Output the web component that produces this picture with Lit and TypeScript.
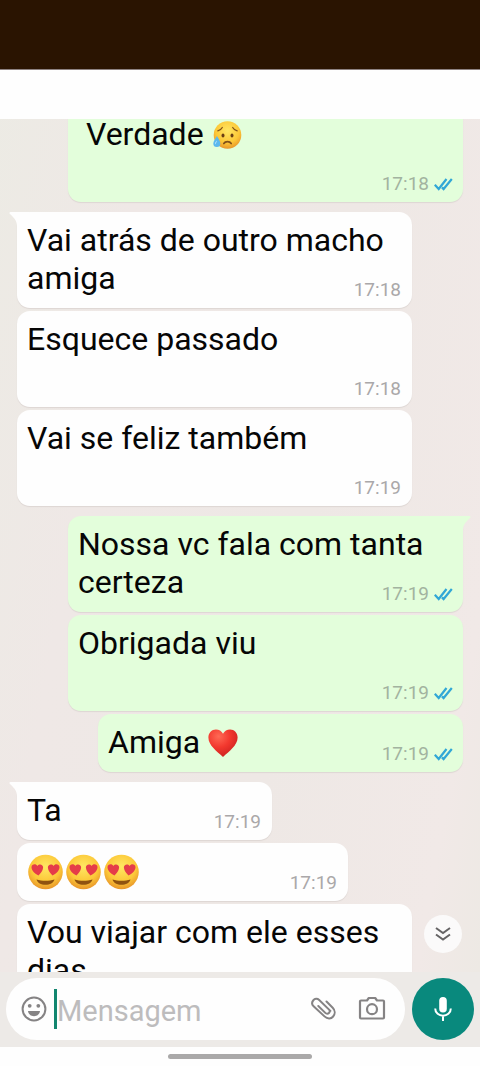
import { LitElement, html, css, svg } from "lit";
import { customElement, property } from "lit/decorators.js";
import { classMap } from "lit/directives/class-map.js";

type Part = string | { emoji: "sad" | "heart" | "love" };

interface Message {
  parts: Part[];
  time: string;
  mine?: boolean;
  first?: boolean;
  size: "wide" | "medium" | "short" | "small";
}

const MESSAGES: Message[] = [
  { parts: [" Verdade ", { emoji: "sad" }], time: "17:18", mine: true, size: "wide" },
  { parts: ["Vai atrás de outro macho amiga"], time: "17:18", first: true, size: "wide" },
  { parts: ["Esquece passado"], time: "17:18", size: "wide" },
  { parts: ["Vai se feliz também"], time: "17:19", size: "wide" },
  { parts: ["Nossa vc fala com tanta certeza"], time: "17:19", mine: true, first: true, size: "wide" },
  { parts: ["Obrigada viu"], time: "17:19", mine: true, size: "wide" },
  { parts: ["Amiga ", { emoji: "heart" }], time: "17:19", mine: true, size: "medium" },
  { parts: ["Ta"], time: "17:19", first: true, size: "small" },
  { parts: [{ emoji: "love" }, { emoji: "love" }, { emoji: "love" }], time: "17:19", size: "short" },
  { parts: ["Vou viajar com ele esses dias"], time: "", size: "wide" },
];

const faceGradient = svg`
  <defs>
    <radialGradient id="face" cx="50%" cy="35%" r="65%">
      <stop offset="0" stop-color="#ffe763"></stop>
      <stop offset="0.65" stop-color="#fcc838"></stop>
      <stop offset="1" stop-color="#e8952a"></stop>
    </radialGradient>
  </defs>`;

@customElement("chat-emoji")
export class ChatEmoji extends LitElement {
  @property() name = "sad";

  static styles = css`
    :host { display: inline-block; vertical-align: middle; }
    .icon { display: block; width: 30px; height: 30px; }
    .love { width: 38px; height: 36px; }
  `;

  render() {
    if (this.name === "heart") {
      return html`<svg class="icon" viewBox="0 0 30 30" role="img" aria-label="❤️">
        <defs>
          <radialGradient id="red" cx="35%" cy="25%" r="80%">
            <stop offset="0" stop-color="#ff6a55"></stop>
            <stop offset="0.5" stop-color="#f2382e"></stop>
            <stop offset="1" stop-color="#c9201f"></stop>
          </radialGradient>
        </defs>
        <path fill="url(#red)" d="M15 29C9 23.500.4 17.500.4 9.600.4 5 3.700 1.600 7.900 1.600c3 0 5.700 1.500 7.100 4.200 1.400-2.700 4.100-4.200 7.100-4.200 4.200 0 7.500 3.400 7.500 8 0 7.900-8.600 13.900-14.600 19.400z"></path>
      </svg>`;
    }
    if (this.name === "love") {
      return html`<svg class="icon love" viewBox="0 0 38 36" role="img" aria-label="😍">
        ${faceGradient}
        <circle cx="18.500" cy="18" r="17.300" fill="url(#face)"></circle>
        <path fill="#e53c49" d="M11.500 21.500C8 19.500 4.300 16.500 4.500 12.900c.1-3 4.500-3.900 5.900-1 2-2.600 6.100-1.200 5.700 1.900-.3 2.900-2.500 5.700-4.600 7.700z"></path>
        <path fill="#e53c49" d="M25.500 21.500c-2.100-2-4.300-4.800-4.600-7.700-.4-3.100 3.700-4.500 5.700-1.900 1.400-2.900 5.800-2 5.900 1 .2 3.600-3.500 6.600-7 8.600z"></path>
        <path fill="#8f5210" d="M9.500 25.500c5.500 1.800 12.500 1.800 18 0-1 3.400-4.600 5.300-9 5.300s-8-1.900-9-5.300z"></path>
      </svg>`;
    }
    return html`<svg class="icon" viewBox="0 0 30 30" role="img" aria-label="😥">
      ${faceGradient}
      <circle cx="15.500" cy="15" r="13.800" fill="url(#face)"></circle>
      <g fill="none" stroke="#80501a" stroke-width="1.200" stroke-linecap="round">
        <path d="M5.800 10.800c2-.5 3.700-1.700 4.500-3.300M25.200 10.800c-2-.5-3.700-1.700-4.500-3.300"></path>
        <path d="M11.800 23.500c1.500-2.600 5.900-2.600 7.400 0" stroke-width="1.700"></path>
      </g>
      <ellipse cx="11" cy="15.500" rx="1.500" ry="2.100" fill="#6b3f14"></ellipse>
      <ellipse cx="20" cy="15.500" rx="1.500" ry="2.100" fill="#6b3f14"></ellipse>
      <path fill="#5bb8ee" d="M5 16c1.500 2.500 3.300 5 3.300 7.500a3.500 3.500 0 0 1-7 0C1.300 21 3.500 18.500 5 16z"></path>
      <path fill="#c9ecff" d="M4.800 20.500c-1.200 1.500-2 2.800-1.600 4 .6-1.200 1.600-2 1.600-4z"></path>
    </svg>`;
  }
}

@customElement("chat-bubble")
export class ChatBubble extends LitElement {
  @property({ attribute: false }) message!: Message;

  static styles = css`
    :host { display: flex; flex-direction: column; }
    .bubble {
      position: relative;
      display: grid;
      box-sizing: border-box;
      padding: 9px 10px 11px;
      border-radius: 13px;
      background: #fefefe;
      box-shadow: 0 1px 1px #ddd6d3;
      color: #060606;
      align-self: flex-start;
    }
    .mine { background: #e3fedb; align-self: flex-end; }
    .wide { width: calc(100% - 51px); min-height: 96px; }
    .medium { width: calc(100% - 81px); }
    .short { width: 331px; }
    .small { width: 255px; }
    .text {
      grid-area: 1 / 1;
      margin: 0;
      font-size: 32px;
      line-height: 38px;
      white-space: pre-wrap;
    }
    .text chat-emoji { margin-top: -4px; }
    .meta {
      grid-area: 1 / 1;
      place-self: end;
      display: flex;
      align-items: center;
      gap: 5px;
      margin: 0 1px -5px 0;
      font-size: 19px;
      line-height: 24px;
      color: #aaa8a9;
    }
    .mine .meta { color: #a2b39f; margin-right: 0; }
    .ticks { width: 19px; height: 14px; }
    .tail { position: absolute; top: 0; left: -8px; width: 20px; height: 14px; fill: #fefefe; }
    .mine .tail { left: auto; right: -8px; fill: #e3fedb; transform: scaleX(-1); }
  `;

  render() {
    const m = this.message;
    return html`<article class=${classMap({ bubble: true, mine: !!m.mine, [m.size]: true })}>
      ${m.first
        ? html`<svg class="tail" viewBox="0 0 20 14" aria-hidden="true"><path d="M1.500 0H20v14H8C8 8 4 5 .5 1.500Q0 0 1.500 0z"></path></svg>`
        : ""}
      <p class="text">${m.parts.map((p) =>
        typeof p === "string" ? p : html`<chat-emoji name=${p.emoji}></chat-emoji>`)}</p>
      ${m.time
        ? html`<div class="meta"><time>${m.time}</time>${m.mine
            ? html`<svg class="ticks" viewBox="0 0 19 14" role="img" aria-label="Lida" fill="none" stroke="#31a7d6" stroke-width="2.200">
                <path d="M.8 7.700l3.900 4.300L12.500 2M8 10.400l1.600 1.600L17.800 2"></path>
              </svg>`
            : ""}</div>`
        : ""}
    </article>`;
  }
}

@customElement("app-root")
export class AppRoot extends LitElement {
  static styles = css`
    :host {
      display: flex;
      flex-direction: column;
      height: 100vh;
      overflow: hidden;
      font-family: Roboto, "Noto Sans", sans-serif;
      background: linear-gradient(100deg, #ecebe4 0%, #efe8e6 25%, #eee8e5 60%, #f1e9e7 88%, #ece9e3 100%);
    }
    .status { flex: none; height: 69px; background: #2a1401; border-bottom: 1px solid #8d8281; }
    .header { flex: none; height: 49px; background: #fefefe; }
    .chat { position: relative; flex: 1; min-height: 0; display: flex; overflow: hidden; }
    .messages {
      flex: 1;
      display: flex;
      flex-direction: column;
      gap: 3px;
      height: max-content;
      margin: -13px 0 0;
      padding: 0 17px;
    }
    .group { margin-top: 7px; }
    .jump {
      position: absolute;
      right: 18px;
      bottom: 19px;
      width: 38px;
      height: 38px;
      padding: 0;
      border: 0;
      border-radius: 50%;
      background: #fbfafa;
      display: grid;
      place-items: center;
    }
    .jump svg { width: 18px; height: 16px; }
    .composer { flex: none; display: flex; gap: 7px; padding: 6px 6px 7px; background: #edeae7; }
    .field {
      flex: 1;
      min-width: 0;
      height: 62px;
      box-sizing: border-box;
      display: flex;
      align-items: center;
      padding: 0 19px 0 14px;
      border-radius: 31px;
      background: #fefefe;
    }
    .tool {
      flex: none;
      display: grid;
      place-items: center;
      padding: 0;
      border: 0;
      background: none;
      color: #858384;
    }
    .tool svg { display: block; width: 28px; height: 28px; }
    .caret { flex: none; width: 3px; height: 40px; margin-left: 6px; background: #12866f; }
    .input {
      flex: 1;
      min-width: 0;
      height: 44px;
      box-sizing: border-box;
      padding: 4px 0 0;
      border: 0;
      outline: 0;
      background: none;
      font: 29px/40px Roboto, "Noto Sans", sans-serif;
      color: #060606;
      caret-color: #12866f;
    }
    .input::placeholder { color: #bdbcbd; opacity: 1; }
    .actions { display: flex; gap: 21px; }
    .mic {
      flex: none;
      width: 62px;
      height: 62px;
      padding: 0;
      border: 0;
      border-radius: 50%;
      background: #09897d;
      display: grid;
      place-items: center;
    }
    .mic svg { width: 20px; height: 26px; }
    .nav { flex: none; height: 19px; background: #fefefe; display: grid; place-items: center; }
    .handle { width: 30%; height: 5px; border-radius: 3px; background: #aaa9a9; }
  `;

  render() {
    return html`
      <div class="status"></div>
      <header class="header"></header>
      <main class="chat">
        <div class="messages">
          ${MESSAGES.map((m) => html`<chat-bubble class=${m.first ? "group" : ""} .message=${m}></chat-bubble>`)}
        </div>
        <button class="jump" aria-label="Ir para o fim">
          <svg viewBox="0 0 18 16" fill="none" stroke="#666465" stroke-width="2">
            <path d="M2 2l7 5 7-5M2 8.500l7 5 7-5"></path>
          </svg>
        </button>
      </main>
      <footer class="composer">
        <div class="field">
          <button class="tool" aria-label="Emojis">
            <svg viewBox="0 0 28 28">
              <circle cx="14" cy="14" r="11.400" fill="none" stroke="currentColor" stroke-width="2"></circle>
              <circle cx="9.700" cy="10.800" r="1.900" fill="currentColor"></circle>
              <circle cx="18.300" cy="10.800" r="1.900" fill="currentColor"></circle>
              <path fill="currentColor" d="M8 16h12c-.4 3.200-2.900 5.200-6 5.200S8.400 19.200 8 16z"></path>
            </svg>
          </button>
          <span class="caret"></span>
          <input class="input" type="text" placeholder="Mensagem" aria-label="Mensagem" />
          <div class="actions">
            <button class="tool" aria-label="Anexar">
              <svg viewBox="0 0 28 28" fill="none" stroke="currentColor" stroke-width="2" stroke-linecap="round">
                <path d="M17.500 6.500l6.200 6.200c5.600 5.600-1.700 15-8.200 8.700L4.600 11.200C.7 7.400 6 1.200 10.200 5l9.600 9.400c2.500 2.500-1 6-3.500 3.500l-7-6.900M12.600 7.400l8.800 8.500"></path>
              </svg>
            </button>
            <button class="tool" aria-label="Câmera">
              <svg viewBox="0 0 28 28" fill="none" stroke="currentColor" stroke-width="2.200" stroke-linejoin="round">
                <path d="M3 5.500h6L10.800 3h6.400L19 5.500h6a1 1 0 0 1 1 1v16a1 1 0 0 1-1 1H3a1 1 0 0 1-1-1v-16a1 1 0 0 1 1-1z"></path>
                <circle cx="14" cy="14.200" r="5"></circle>
              </svg>
            </button>
          </div>
        </div>
        <button class="mic" aria-label="Gravar áudio">
          <svg viewBox="0 0 20 26">
            <rect x="6.200" y="1" width="7.600" height="15.500" rx="3.800" fill="#fff"></rect>
            <path d="M2.200 12.500c0 9.500 15.600 9.500 15.600 0M10 19.500V25" fill="none" stroke="#fff" stroke-width="2"></path>
          </svg>
        </button>
      </footer>
      <div class="nav"><div class="handle"></div></div>
    `;
  }
}
